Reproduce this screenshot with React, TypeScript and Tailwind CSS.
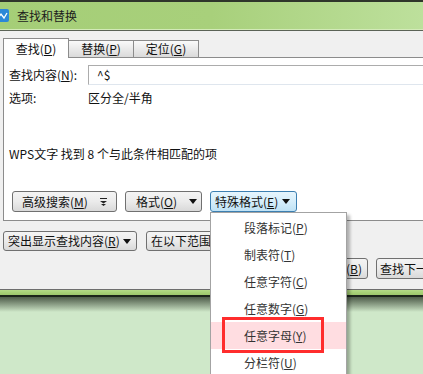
import type { ReactNode } from "react";

const menuItems = [
  { label: "段落标记", key: "P" },
  { label: "制表符", key: "T" },
  { label: "任意字符", key: "C" },
  { label: "任意数字", key: "G" },
  { label: "任意字母", key: "Y" },
  { label: "分栏符", key: "U" },
];

function Caret() {
  return (
    <svg width="8" height="5" viewBox="0 0 8 5" className="shrink-0">
      <path d="M0 0h8L4 5z" fill="#111" />
    </svg>
  );
}

function MoreIcon() {
  return (
    <svg width="7" height="8" viewBox="0 0 7 8" className="shrink-0">
      <path d="M0 0h7v1H0z" fill="#222" />
      <path d="M0 3h7L3.5 5.5z" fill="#222" />
      <path d="M1 6h5L3.5 8z" fill="#222" />
    </svg>
  );
}

function Btn({ className, children }: { className?: string; children: ReactNode }) {
  return (
    <div
      className={
        "flex items-center shrink-0 border border-[#707070] rounded-[3px] bg-linear-to-b from-[#f4f4f4] via-[#ebebeb] to-[#d9d9d9] text-[12px] leading-none text-[#111] " +
        (className ?? "")
      }
    >
      {children}
    </div>
  );
}

export default function App() {
  return (
    <div className="relative w-[423px] h-[374px] overflow-hidden bg-[#cfe8c9] font-['Noto_Sans_CJK_SC',sans-serif] text-[#111]">
      {/* Title bar */}
      <div className="h-[2px] bg-[#2f362b]" />
      <div className="h-[27px] flex items-center bg-linear-to-r from-[#a5ce77] via-[#a8d07b] to-[#bde09c]">
        <div className="-ml-[3px] w-[12px] h-[13px] rounded-[2px] bg-[#2c88d8] flex items-center justify-center">
          <svg width="10" height="8" viewBox="0 0 10 8">
            <path d="M0 6L3 2L6 6L9 1" stroke="#fff" strokeWidth="1.3" fill="none" />
          </svg>
        </div>
        <span className="ml-[8px] text-[12px] leading-none text-[#1c1c1c]">查找和替换</span>
      </div>
      <div className="h-px bg-[#d3eab8]" />
      <div className="h-px bg-[#5b6356]" />

      {/* Dialog body */}
      <div className="h-[259px] bg-[#f0f0f0] border-b border-[#6e6e6e]">
        {/* Tabs */}
        <div className="h-[26px] pt-[7px] pl-[3px] flex items-end text-[12px] leading-none">
          <div className="relative z-10 -mb-px w-[66px] h-[20px] bg-white border border-b-0 border-[#8c8c8c] flex items-center justify-center">
            查找(<span className="underline">D</span>)
          </div>
          <div className="w-[65px] h-[17px] border border-b-0 border-l-0 border-[#8c8c8c] bg-linear-to-b from-[#fafafa] to-[#dadada] flex items-center justify-center">
            替换(<span className="underline">P</span>)
          </div>
          <div className="w-[65px] h-[17px] border border-b-0 border-l-0 border-[#8c8c8c] bg-linear-to-b from-[#fafafa] to-[#dadada] flex items-center justify-center">
            定位(<span className="underline">G</span>)
          </div>
        </div>

        {/* Tab panel */}
        <div className="ml-[3px] h-[164px] bg-white border-t border-l border-b border-[#8c8c8c] text-[12px] leading-none">
          <div className="mt-[7px] h-[20px] flex items-center pl-[5px]">
            <span className="w-[79px] shrink-0">查找内容(<span className="underline">N</span>):</span>
            <div className="flex-1 h-full flex items-center pl-[8px] border-t border-l border-[#acacac] border-b border-b-[#dfe6ee]">
              ^$
            </div>
          </div>
          <div className="mt-[6px] h-[14px] flex items-center pl-[5px]">
            <span className="w-[79px] shrink-0">选项:</span>
            <span>区分全/半角</span>
          </div>
          <div className="mt-[42px] h-[14px] flex items-center pl-[5px]">
            WPS文字 找到 8 个与此条件相匹配的项
          </div>
          <div className="mt-[30px] h-[21px] flex gap-[8px] pl-[8px]">
            <Btn className="w-[105px] pl-[9px] gap-[12px]">
              <span>高级搜索(<span className="underline">M</span>)</span>
              <MoreIcon />
            </Btn>
            <Btn className="w-[77px] pl-[10px] gap-[12px]">
              <span>格式(<span className="underline">O</span>)</span>
              <Caret />
            </Btn>
            <Btn className="w-[87px] pl-[4px] gap-[4px] !border-[#3c7fb1] !from-[#e6f5fd] !via-[#d5eefb] !to-[#bfe2f5]">
              <span>特殊格式(<span className="underline">E</span>)</span>
              <Caret />
            </Btn>
          </div>
        </div>

        {/* Below panel buttons */}
        <div className="mt-[10px] h-[20px] flex gap-[9px] pl-[3px]">
          <Btn className="w-[134px] pl-[4px] gap-[3px]">
            <span>突出显示查找内容(<span className="underline">R</span>)</span>
            <Caret />
          </Btn>
          <Btn className="w-[140px] pl-[4px]">
            <span>在以下范围中查找(<span className="underline">I</span>)</span>
          </Btn>
        </div>
        <div className="mt-[7px] h-[21px] flex gap-[8px] pl-[277px]">
          <Btn className="w-[91px] justify-end pr-[5px]">
            <span>查找上一处(<span className="underline">B</span>)</span>
          </Btn>
          <Btn className="w-[92px] pl-[3px]">
            <span>查找下一处(<span className="underline">F</span>)</span>
          </Btn>
        </div>
      </div>

      {/* Window bottom edge */}
      <div className="h-[5px] bg-linear-to-b from-[#b4da88] via-[#a7d077] to-[#9cc66c]" />
      <div className="h-[2px] bg-[#1b241a]" />
      <div className="h-[15px] bg-linear-to-b from-[#4f5d4b] to-[#cfe8c9]" />

      {/* Dropdown menu */}
      <div className="absolute left-[210px] top-[212px] w-[137px] h-[200px] bg-white border border-[#a3a3a3] pt-[1px] shadow-[3px_3px_3px_rgba(0,0,0,0.28)] text-[12px] leading-none text-[#333]">
        {menuItems.map((item) => (
          <div
            key={item.key}
            className={
              "h-[27px] flex items-center pl-[33px] " + (item.key === "Y" ? "bg-[#ffdde1]" : "")
            }
          >
            {item.label}(<span className="underline">{item.key}</span>)
          </div>
        ))}
        <div className="absolute left-[11px] top-[104px] w-[102px] h-[36px] border-[3px] border-[#ff2d2d]" />
      </div>
    </div>
  );
}
